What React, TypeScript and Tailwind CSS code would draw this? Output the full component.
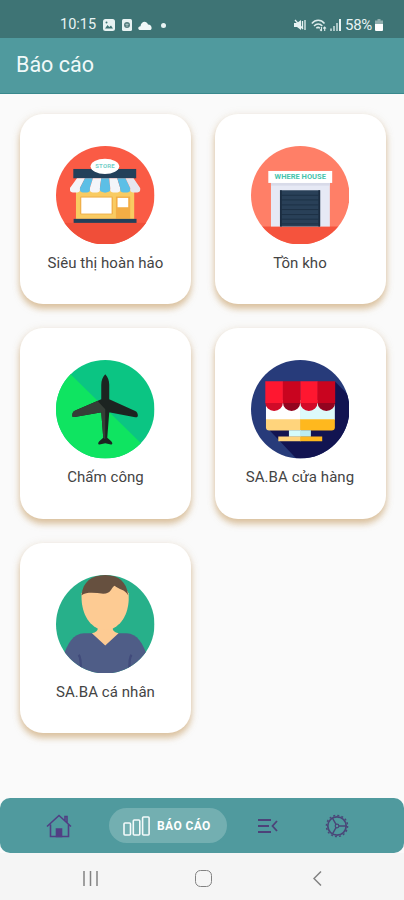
import type { ReactNode } from "react";

interface ReportCardProps {
  title: string;
  icon: ReactNode;
}

function StoreIcon() {
  return (
    <svg viewBox="0 0 296 296" className="size-[98.5px]">
      <clipPath id="store">
        <circle cx="148" cy="148" r="148" />
      </clipPath>
      <g clipPath="url(#store)">
        <rect width="296" height="296" fill="#fa5b45" />
        <rect y="231" width="296" height="65" fill="#f04e39" />
        <rect x="52" y="69" width="189" height="28" fill="#23405a" />
        <rect x="60" y="130" width="175" height="89" fill="#f9cb62" />
        <rect x="72" y="152" width="99" height="54" rx="4" fill="#f0b04a" />
        <rect x="76" y="155" width="91" height="48" fill="#fff" />
        <rect x="180" y="152" width="43" height="67" fill="#f3ad45" />
        <rect x="185" y="156" width="32" height="28" fill="#fff" />
        <rect x="53" y="219" width="189" height="12" fill="#23405a" />
        <path d="M63 97H87L72 126V132A15 8 0 0 1 42 132V126Z" fill="#f4f5f9" />
        <path d="M87 97H111L102 126V132A15 8 0 0 1 72 132V126Z" fill="#5cbfe6" />
        <path d="M111 97H136L132 126V132A15 8 0 0 1 102 132V126Z" fill="#f4f5f9" />
        <path d="M136 97H160L163 126V132A15 8 0 0 1 132 132V126Z" fill="#5cbfe6" />
        <path d="M160 97H184L193 126V132A15 8 0 0 1 163 132V126Z" fill="#f4f5f9" />
        <path d="M184 97H209L223 126V132A15 8 0 0 1 193 132V126Z" fill="#5cbfe6" />
        <path d="M209 97H233L253 126V132A15 8 0 0 1 223 132V126Z" fill="#e6e6ee" />
        <ellipse cx="147" cy="61" rx="43" ry="23" fill="#fff" />
        <text x="147" y="67" textAnchor="middle" textLength="58" fontSize="18" className="font-['Roboto',sans-serif] font-bold" fill="#76cfc9">
          STORE
        </text>
      </g>
    </svg>
  );
}

function WarehouseIcon() {
  return (
    <svg viewBox="0 0 296 296" className="size-[98.5px]">
      <clipPath id="warehouse">
        <circle cx="148" cy="148" r="148" />
      </clipPath>
      <g clipPath="url(#warehouse)">
        <rect width="296" height="296" fill="#ff7f67" />
        <rect y="242" width="296" height="54" fill="#f5533d" />
        <rect x="60" y="108" width="177" height="134" fill="#e6e9f5" />
        <rect x="60" y="111" width="177" height="8" fill="#d8dbe9" />
        <rect x="52" y="75" width="192" height="36" fill="#fff" />
        <rect x="87" y="133" width="121" height="109" fill="#294058" />
        <path d="M92 148H203M92 162H203M92 177H203M92 191H203M92 206H203M92 220H203M92 234H203" stroke="#1d3146" strokeWidth="3" />
        <path d="M90 133V242M205 133V242" stroke="#1b2c40" strokeWidth="5" />
        <text x="148" y="99" textAnchor="middle" textLength="154" lengthAdjust="spacingAndGlyphs" fontSize="19" className="font-['Roboto',sans-serif] font-bold" fill="#45c4ad">
          WHERE HOUSE
        </text>
      </g>
    </svg>
  );
}

function PlaneIcon() {
  return (
    <svg viewBox="0 0 296 296" className="size-[98.5px]">
      <clipPath id="plane">
        <circle cx="148" cy="148" r="148" />
      </clipPath>
      <g clipPath="url(#plane)">
        <rect width="296" height="296" fill="#0bc583" />
        <path d="M0 0L296 290V296H0Z" fill="#0fe461" />
        <path
          d="M148 43C140 51 136 62 136 74V118L58 152C51 155 49 160 49 167C49 172 52 172 56 171L133 158H136L142 234L130 244C125 249 126 255 131 254L148 250L165 254C170 255 171 249 166 244L154 234L160 158H163L238 172C243 173 246 172 246 167C246 161 244 156 238 153L160 118V74C160 62 156 51 148 43Z"
          fill="#1c2421"
        />
        <path d="M125 123L58 152C51 155 49 160 49 167C49 172 52 172 56 171L133 158H136L142 234L148 238V148Z" fill="#353e37" />
      </g>
    </svg>
  );
}

function MonitorIcon() {
  return (
    <svg viewBox="0 0 296 296" className="size-[98.5px]">
      <clipPath id="monitor">
        <circle cx="148" cy="148" r="148" />
      </clipPath>
      <g clipPath="url(#monitor)">
        <rect width="296" height="296" fill="#273b7a" />
        <path d="M253 65L296 108V296H136L55 210Z" fill="#121451" />
        <path d="M45 120H150V180H45Z" fill="#fff" />
        <path d="M148 120H252V180H148Z" fill="#ddfafa" />
        <path d="M45 178H150V212H55Q45 212 45 202Z" fill="#ffd47c" />
        <path d="M148 178H252V202Q252 212 242 212H148Z" fill="#ffb81e" />
        <path d="M114 211H150V231H114Z" fill="#d5fbfb" />
        <path d="M148 211H180V231H148Z" fill="#bcecf0" />
        <path d="M82 230H150V244H82Z" fill="#ffd47c" />
        <path d="M148 230H214V244H148Z" fill="#ffb81e" />
        <path d="M43 128H96A26 25 0 0 1 43 128ZM148 128H200A26 25 0 0 1 148 128Z" fill="#d10b28" />
        <path d="M96 128H148A26 25 0 0 1 96 128ZM200 128H253A26 25 0 0 1 200 128Z" fill="#93041f" />
        <path d="M43 64H96V129H43ZM148 64H201V129H148Z" fill="#ff1730" />
        <path d="M96 64H148V129H96ZM200 64H253V129H200Z" fill="#c9041f" />
      </g>
    </svg>
  );
}

function PersonIcon() {
  return (
    <svg viewBox="0 0 296 296" className="size-[98.5px]">
      <clipPath id="person">
        <circle cx="148" cy="148" r="148" />
      </clipPath>
      <g clipPath="url(#person)">
        <rect width="296" height="296" fill="#27b08a" />
        <path d="M20 250C34 205 52 176 84 175H212C244 176 262 205 276 250V296H20Z" fill="#4f5d87" />
        <path d="M108 175Q126 172 126 158H170Q170 172 188 175L148 212Z" fill="#fdcb93" />
        <path d="M77 55C74 100 90 146 128 162Q148 168 168 162C206 146 222 100 218 55L200 25H95Z" fill="#fdcb93" />
        <path d="M77 61C80 20 108 0 148 0C188 0 212 20 217 61C206 42 190 44 176 32C164 40 166 56 142 56C118 54 92 50 77 61Z" fill="#66503f" />
        <path d="M68 240Q76 248 74 290M227 240Q219 248 221 290" fill="none" stroke="#414b7b" strokeWidth="7" />
      </g>
    </svg>
  );
}

const reports: ReportCardProps[] = [
  { title: "Siêu thị hoàn hảo", icon: <StoreIcon /> },
  { title: "Tồn kho", icon: <WarehouseIcon /> },
  { title: "Chấm công", icon: <PlaneIcon /> },
  { title: "SA.BA cửa hàng", icon: <MonitorIcon /> },
  { title: "SA.BA cá nhân", icon: <PersonIcon /> },
];

function ReportCard({ title, icon }: ReportCardProps) {
  return (
    <div className="flex h-[190.5px] flex-col items-center rounded-[23px] bg-white pt-8 shadow-[0_5px_6px_rgba(200,158,100,0.55),0_1px_8px_rgba(190,160,120,0.22)]">
      {icon}
      <div className="mt-[8.5px] text-[15px] leading-5 tracking-[0.05px] whitespace-nowrap text-[#444]">{title}</div>
    </div>
  );
}

function StatusBar() {
  return (
    <div className="flex h-[38px] items-start justify-between bg-[#3e7475] pt-[15px] pr-[21px] pl-[60px] text-[14.5px] leading-5 text-[#e8f3f3]">
      <div className="flex items-center">
        <span className="w-[38px] whitespace-nowrap">10:15</span>
        <svg viewBox="0 0 12 12" className="ml-[5px] size-3">
          <rect width="12" height="12" rx="2.5" fill="#e8f3f3" />
          <path d="M2 9.5L4.5 6L6.3 8L8 6.5L10 9.5Z" fill="#3e7475" />
          <circle cx="3.5" cy="3.5" r="1" fill="#3e7475" />
        </svg>
        <svg viewBox="0 0 10 12" className="ml-[7px] h-3 w-2.5">
          <rect width="10" height="12" rx="1.5" fill="#e8f3f3" />
          <circle cx="5" cy="6" r="3" fill="#577f80" />
          <path d="M3.5 5.5H6.5M5 4.5V8" stroke="#b5cccc" strokeWidth=".8" />
        </svg>
        <svg viewBox="0 0 14 9" className="ml-[6px] h-[9px] w-3.5">
          <path d="M2.5 9C-.5 9-.5 5.5 2.5 5.2C3 0 8.5-1 10 3.5C14 3.5 15 9 11.5 9Z" fill="#f1f8f8" />
        </svg>
        <span className="ml-[9px] size-[5px] rounded-full bg-[#e8f3f3]" />
      </div>
      <div className="flex items-center">
        <svg viewBox="0 0 12 12" className="size-3">
          <path d="M0 4H3L7 1V11L3 8H0Z" fill="#e8f3f3" />
          <path d="M1 1L9 10M8.5 2V9M11 1V11" stroke="#e8f3f3" strokeWidth="1.3" />
        </svg>
        <svg viewBox="0 0 16 13" className="ml-[5px] h-[13px] w-4" fill="none" stroke="#dcebeb" strokeWidth="1.5">
          <path d="M.8 4.5C4.5 .3 10 .3 13.5 4.5M3 7C5.5 4.3 9 4.3 11.3 7M5.3 9.3Q7 7.5 9 9.3" />
          <path d="M10.5 8V12M9 10.5L10.5 12M13.7 12V8M12.3 9.5L13.7 8L15 9.5" strokeWidth="1.1" />
        </svg>
        <svg viewBox="0 0 11 12" className="ml-[3px] h-3 w-[11px]">
          <path d="M0 9.5H2V12H0ZM3 7H5V12H3ZM6 4H8V12H6Z" fill="#a9c5c5" />
          <path d="M9 0H11V12H9Z" fill="#e8f3f3" />
        </svg>
        <span className="ml-[4px] w-[29px] text-[15px] tracking-[-0.3px] whitespace-nowrap">58%</span>
        <svg viewBox="0 0 8 12" className="ml-px h-3 w-2">
          <path d="M2.5 0H5.5V1.5H8V5H0V1.5H2.5Z" fill="#91aeae" />
          <path d="M0 5H8V11Q8 12 7 12H1Q0 12 0 11Z" fill="#fff" />
        </svg>
      </div>
    </div>
  );
}

function BottomTabs() {
  return (
    <nav className="flex h-[55px] items-center rounded-[10px] bg-[#509a9e] pl-[46px]">
      <svg viewBox="0 0 26 24" className="h-6 w-[26px]" fill="none" stroke="#513f84" strokeWidth="1.6">
        <path d="M1 12.5L13 1.5L25 12.5M4.5 10.5V22.5H22.5V10.5M19 6.5V2.5H21V8.5" />
        <path d="M10.5 22.5V15H15.5V22.5Z" fill="#513f84" />
      </svg>
      <div className="ml-[37px] flex h-[34.5px] w-[118px] items-center rounded-full bg-[#73afb1] pl-[14px]">
        <svg viewBox="0 0 28 20" className="h-5 w-7" fill="none" stroke="#f4fafa" strokeWidth="1.6">
          <rect x="1" y="7" width="6.5" height="12" rx="1" />
          <rect x="10.3" y="4" width="6.5" height="15" rx="1" />
          <rect x="19.6" y="1" width="6.5" height="18" rx="1" />
        </svg>
        <span className="ml-[6px] text-[12px] font-bold tracking-[0.4px] whitespace-nowrap text-white">BÁO CÁO</span>
      </div>
      <svg viewBox="0 0 20 14" className="ml-[31px] h-3.5 w-5" fill="none" stroke="#4d4279" strokeWidth="1.8">
        <path d="M0 1H13M0 7H11M0 13H13M19 2L14.5 7L19 12" />
      </svg>
      <svg viewBox="0 0 24 24" className="ml-[47px] size-6" fill="none" stroke="#4a4678">
        <circle cx="12" cy="12" r="9.2" strokeWidth="1.7" />
        <circle cx="12" cy="12" r="10.6" strokeWidth="1.4" strokeDasharray="2 2.163" />
        <circle cx="12" cy="12" r="1.8" strokeWidth="1.2" />
        <path d="M14 12H21M11 10.3L7.5 4.2M11 13.7L7.5 19.8" strokeWidth="1.4" />
      </svg>
    </nav>
  );
}

function SystemNav() {
  return (
    <div className="flex h-[47px] items-center bg-[#f5f5f5] pl-[83px] text-[#828282]">
      <svg viewBox="0 0 15 15" className="mt-[3px] size-[15px]" stroke="currentColor" strokeWidth="1.5">
        <path d="M1 0V15M7.5 0V15M14 0V15" />
      </svg>
      <span className="mt-[3px] ml-[97px] size-[17px] rounded-[5.5px] border-[1.5px] border-current" />
      <svg viewBox="0 0 9 15" className="mt-[3px] ml-[101px] h-[15px] w-[9px]" fill="none" stroke="currentColor" strokeWidth="1.5">
        <path d="M8 .5L1 7.5L8 14.5" />
      </svg>
    </div>
  );
}

export default function App() {
  return (
    <div className="flex h-[900px] w-[404px] flex-col overflow-hidden bg-[#fafafa] font-['Roboto',sans-serif]">
      <StatusBar />
      <header className="flex h-[55.5px] items-center border-b border-[#39898d] bg-[#509a9e] pl-4 text-[21.5px] text-[#f1f9f9]">
        Báo cáo
      </header>
      <main className="grid flex-1 grid-cols-2 content-start gap-x-[23.5px] gap-y-6 pt-5 pr-[18.5px] pl-5">
        {reports.map((report) => (
          <ReportCard key={report.title} {...report} />
        ))}
      </main>
      <BottomTabs />
      <SystemNav />
    </div>
  );
}
